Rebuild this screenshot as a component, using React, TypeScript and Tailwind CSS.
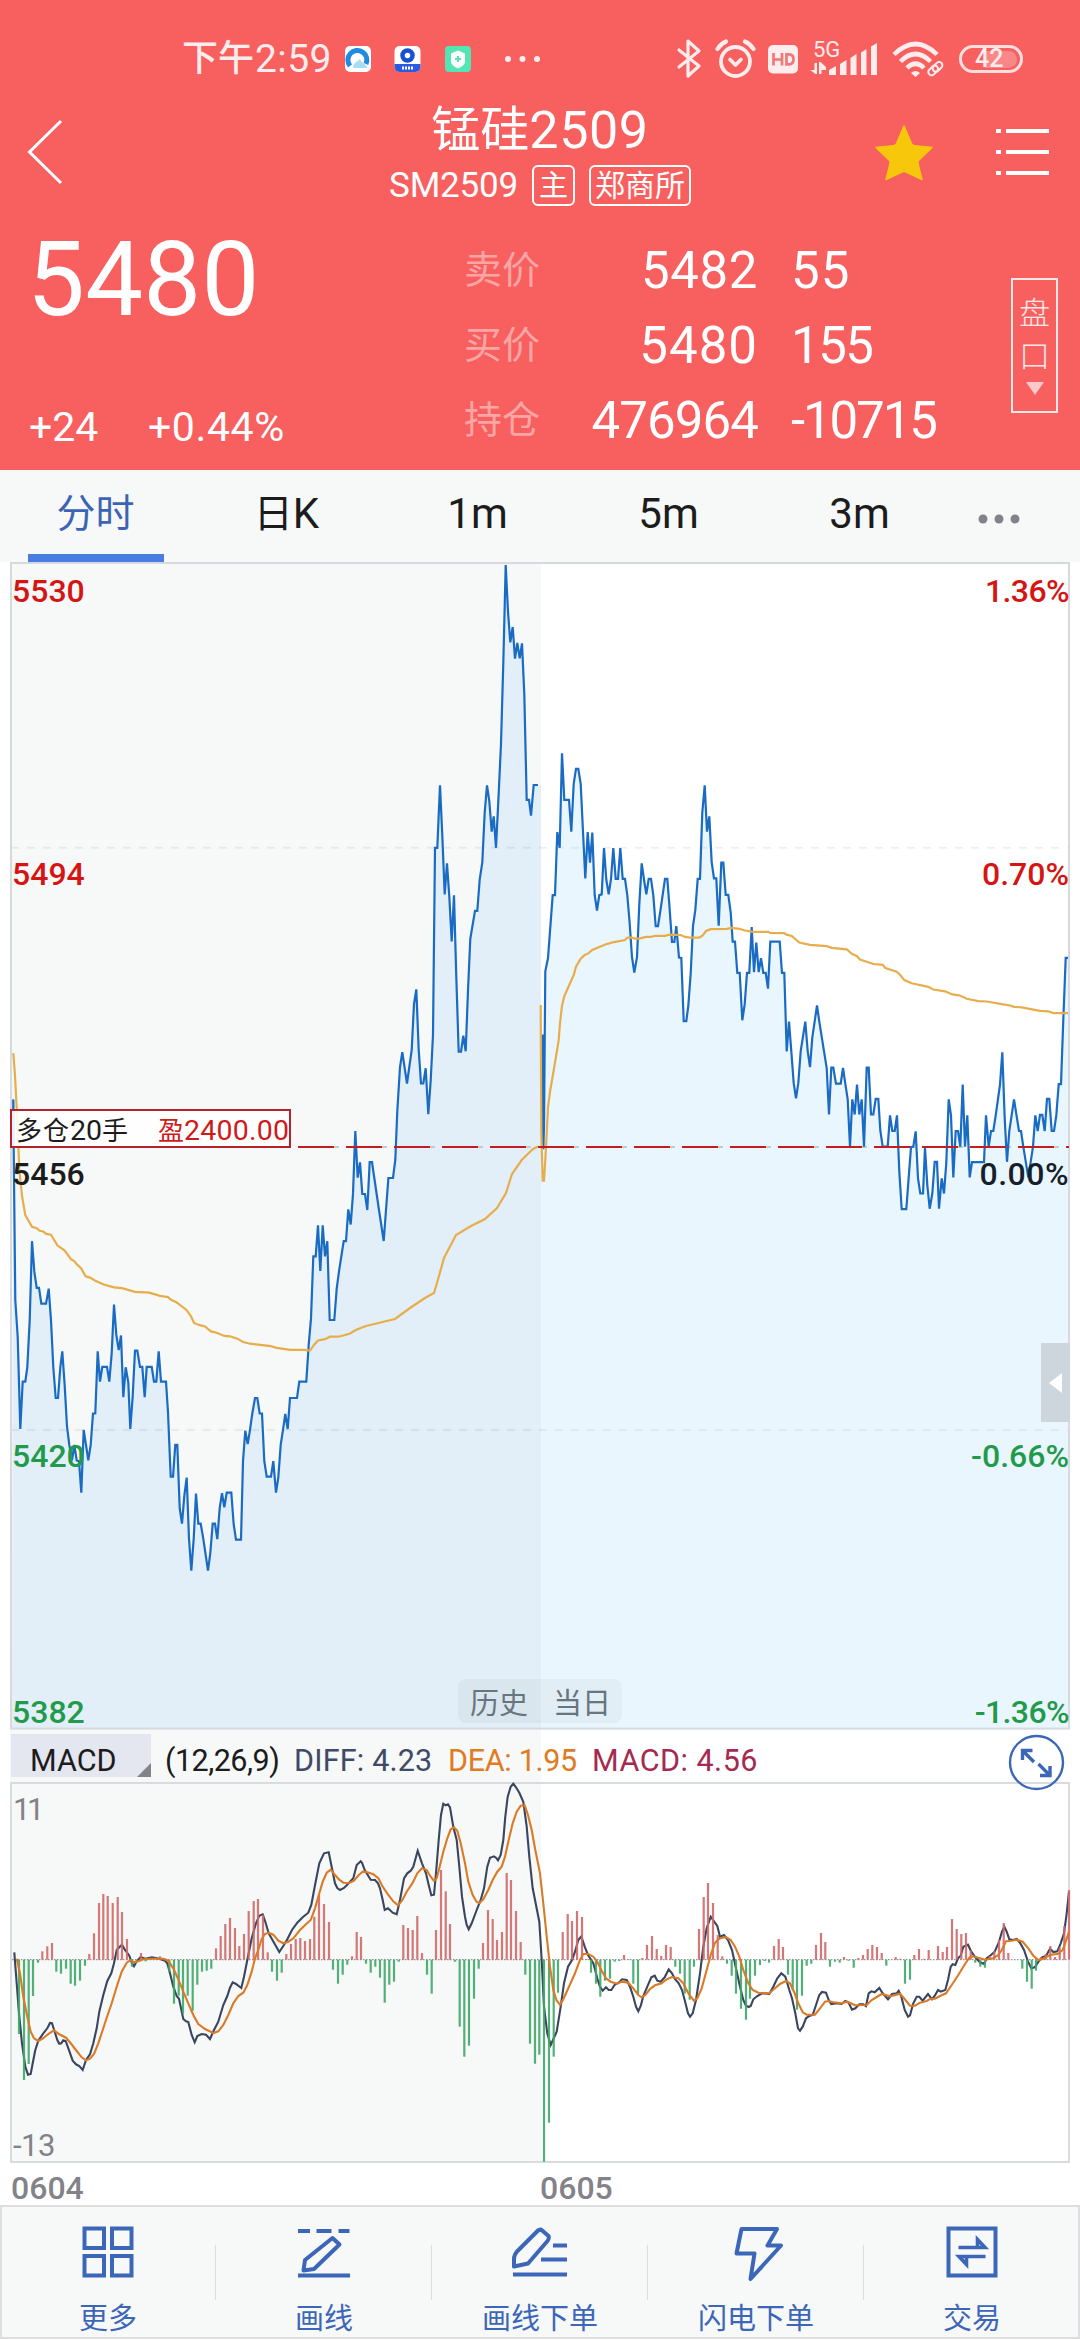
import React from "react";

type Block = { ox: number; oy: number; sx: number; sy: number; pts: string };

const decode = (blocks: Block[]): [number, number][] =>
  blocks.flatMap(({ ox, oy, sx, sy, pts }) =>
    pts
      .trim()
      .split(/\s+/)
      .map((p) => {
        const [x, y] = p.split(",").map(Number);
        return [+(ox + x / sx).toFixed(1), +(oy + y / sy).toFixed(1)] as [number, number];
      }),
  );

const toPath = (pts: [number, number][]) => "M" + pts.map((p) => p.join(" ")).join("L");

const A = { ox: 0, oy: 1100, sx: 3, sy: 2.45 };
const B = { ox: 340, oy: 560, sx: 3, sy: 2.6133 };
const C = { ox: 700, oy: 560, sx: 3, sy: 2.24 };
const P = { ox: 0, oy: 0, sx: 1, sy: 1 };

const priceHistory = decode([
  {
    ...A,
    pts: `40,-1 41,120 46,490 53,580 61,806 68,690 76,690 82,655 89,540 96,346 103,420 110,460 117,460 124,499 138,499 146,462 153,540 160,655 167,730 174,730 181,655 187,616 194,700 201,800 208,845 216,883 223,845 230,883 237,885 244,962 251,808 258,845 265,883 272,845 279,768 286,768 293,616 300,690 307,654 321,654 328,690 335,620 342,501 349,575 356,613 363,577 370,728 377,655 385,692 391,806 398,725 405,614 412,614 420,654 427,654 434,728 440,654 455,654 462,690 469,690 476,616 483,690 498,690 504,765 512,923 519,923 526,845 532,845 539,1000 546,1038 553,970 560,925 567,1075 574,1153 581,1075 588,964 595,1038 602,1038 610,1075 624,1153 631,1110 638,1038 645,1038 652,1076 659,1000 666,963 673,998 680,962 694,962 701,1040 708,1077 723,1077 729,885 736,810 743,843 750,808 757,768 765,730 772,730 779,768 786,768 793,885 800,923 813,923 820,885 828,962 835,925 842,845 849,808 856,769 863,806 870,730 891,730 898,690 919,690 926,600 933,535 940,383 947,383 954,307 961,419 968,307 975,383 982,346 989,539 1003,539 1010,462 1017,420 1031,346 1038,346 1045,268 1052,305 1059,230 1066,76 1073,190 1080,153`,
  },
  { ...P, pts: `362.3,1194 365,1194 367.3,1210 369.7,1162 372,1162 374.3,1178 379,1210 383.7,1241 386,1210 388.4,1178 393,1178` },
  {
    ...B,
    pts: `166,1568 172,1440 180,1325 187,1286 201,1368 208,1325 215,1280 222,1160 229,1122 236,1280 243,1368 250,1368 257,1328 265,1448 272,1360 279,1240 285,752 292,752 300,589 307,720 314,874 321,793 328,880 335,997 342,876 349,1090 356,1285 363,1285 370,1243 377,1284 384,1125 391,990 405,917 412,917 419,835 427,790 434,660 441,589 448,630 455,710 461,670 468,752 476,610 483,480 490,270 497,13 504,135 511,215 518,175 525,258 532,217 539,257 546,218 553,350 560,627 567,627 573,668 581,588 594,588`,
  },
]);

const priceToday = decode([
  {
    ...B,
    pts: `608,1240 610,1540 612,1480 616,1075 624,1040 638,876 645,876 652,711 659,752 666,505 673,627 687,627 694,710 701,585 708,546 715,546 722,585 729,710 736,832 743,711 750,791 757,712 764,876 771,916 778,876 785,874 792,753 799,835 806,874 813,833 820,753 827,833 834,833 841,753 848,833 855,833 862,876 869,950 876,1038 883,1078 891,1038 898,900 905,793 912,835 919,874 926,833 933,833 940,876 947,957 954,957 961,918 975,833 982,833 988,900 996,998 1003,998 1009,957 1017,1039 1024,1040 1031,1205 1039,1205 1045,1165 1052,1080 1059,957 1066,915 1073,833 1080,833 1087,660 1094,589 1101,710 1108,670 1115,790 1122,832 1129,832`,
  },
  {
    ...C,
    pts: `56,819 64,678 70,678 77,750 85,750 92,790 98,855 105,855 112,925 119,925 127,1031 134,995 141,925 148,925 155,822 162,923 169,857 176,923 183,892 190,925 197,925 204,960 211,855 239,855 246,925 253,925 260,1101 267,1034 274,1100 281,1172 288,1206 295,1172 302,1100 316,1034 323,1100 330,1136 337,1070 351,998 358,1034 372,1100 380,1138 387,1242 394,1137 400,1137 408,1173 422,1173 429,1138 436,1173 443,1208 450,1314 457,1208 464,1242 471,1175 478,1242 485,1208 492,1314 500,1137 506,1137 513,1242 520,1242 527,1207 535,1207 541,1278 548,1314 563,1314 570,1244 577,1279 584,1279 591,1244 598,1370 605,1454 619,1454 633,1315 640,1314 647,1280 654,1385 661,1419 669,1419 675,1317 682,1400 689,1453 697,1419 704,1348 711,1348 717,1453 725,1385 732,1419 739,1350 746,1208 753,1244 760,1383 767,1279 774,1279 781,1314 788,1175 795,1314 802,1244 809,1383 816,1349 852,1349 858,1244 866,1314 873,1279 880,1279 887,1244 900,1175 907,1103 914,1250 921,1348 928,1279 942,1208 957,1279 963,1279 970,1314 985,1383 992,1348 999,1314 1006,1244 1013,1279 1020,1243 1027,1243 1034,1279 1041,1207 1048,1207 1055,1279 1062,1279 1069,1244 1076,1174 1083,1174 1090,1030 1097,891 1104,891`,
  },
]);

const avgHistory = decode([
  {
    ...A,
    pts: `40,-115 45,-60 52,50 58,170 66,235 76,282 96,311 110,314 118,320 131,323 138,328 153,330 172,356 194,369 214,391 222,394 231,403 243,412 257,432 270,435 286,443 311,452 342,459 366,461 405,470 448,472 480,480 504,483 512,489 530,496 560,515 573,530 582,546 597,551 615,555 633,567 650,570 673,578 690,579 710,584 730,593 750,597 780,600 812,603 830,607 870,612 910,612 930,614 942,600 954,589 975,586 990,580 1015,580 1030,577 1050,572 1066,564 1080,559`,
  },
  { ...P, pts: `366,1326 395,1319 410,1308 425,1298 434,1293 439,1276 444,1258 456,1235 471,1226 485,1219 497,1208 506,1193 512,1174 521.7,1160 526.7,1155 533,1149 538,1146.5` },
]);

const avgToday = decode([
  {
    ...B,
    pts: `602,1163 604,1500 608,1622 612,1622 616,1568 620,1500 624,1430 631,1385 640,1340 656,1255 660,1210 666,1165 673,1140 687,1112 701,1085 708,1063 722,1042 734,1032 745,1028 757,1019 778,1011 798,1004 808,1002 818,999 855,993 862,987 875,987 888,990 900,989 918,985 934,985 945,982 975,982 988,979 1022,980 1035,985 1050,987 1075,987 1080,986`,
  },
  {
    ...C,
    pts: `0,845 8,841 18,831 32,827 80,826 95,824 118,826 135,830 160,833 205,833 210,835 253,836 260,839 275,842 298,857 330,862 380,865 395,869 440,872 455,882 470,887 480,895 500,900 520,905 548,907 556,914 590,922 600,929 613,941 635,948 685,956 700,962 735,966 757,973 778,975 800,983 835,988 860,989 905,995 930,998 942,1001 965,1002 1000,1007 1020,1010 1045,1011 1060,1015 1104,1015`,
  },
]);

const D = { ox: 0, oy: 1720, sx: 3, sy: 3 };
const E = { ox: 360, oy: 1760, sx: 3, sy: 3 };
const F = { ox: 700, oy: 1720, sx: 3, sy: 3 };

const bars = decode([
  {
    ...D,
    pts: `57,942 72,1080 86,1032 99,828 114,728 127,694 142,679 156,669 169,755 183,761 198,746 212,791 225,797 240,782 255,737 268,702 282,640 297,549 310,522 323,528 338,549 353,531 366,576 381,657 396,740 410,722 423,699 437,724 451,716 480,709 494,716 508,755 522,851 536,827 549,881 563,827 578,872 592,794 606,755 620,752 634,746 648,685 662,648 676,612 690,594 705,624 718,678 732,642 746,573 761,543 774,537 789,585 803,697 816,755 831,782 845,758 859,702 873,672 887,657 901,654 915,663 930,657 943,590 957,522 972,552 987,606 999,749 1014,791 1028,764 1042,734 1056,709 1070,636 1083,651`,
  },
  {
    ...E,
    pts: `18,611 32,638 46,620 60,653 74,728 88,674 102,665 116,605 130,495 144,504 158,510 172,468 186,579 201,644 215,701 228,510 243,330 257,394 270,492 285,605 299,800 313,890 327,857 342,716 356,626 369,549 384,450 398,477 411,540 426,516 440,339 453,360 468,453 482,546 496,644 510,851 525,911 538,884 552,1205 567,1088 581,890 594,698 608,516 623,462 636,483 651,453 666,471 680,597 693,638 708,671 721,710 735,662 750,656 764,605 778,603 792,585 806,598 820,671 834,704 847,594 861,555 876,528 890,567 904,588 918,555 932,561 946,620 960,641 974,701 989,719 1002,620 1017,507 1031,411 1044,369 1059,429 1073,525`,
  },
  {
    ...F,
    pts: `67,709 81,731 95,767 108,821 123,866 138,899 150,836 165,767 180,735 194,723 207,728 222,678 236,657 249,681 264,764 278,810 291,869 306,827 320,737 334,731 348,675 363,639 376,666 390,740 405,725 419,728 432,711 446,722 461,743 475,714 489,705 503,687 517,675 531,681 545,699 559,737 587,711 601,716 615,791 630,779 643,705 657,687 673,716 686,690 714,678 728,696 741,681 756,597 770,627 784,642 798,639 812,691 826,728 841,740 855,743 869,708 883,693 897,660 911,609 925,699 967,746 981,785 995,806 1008,752 1023,712 1037,702 1051,678 1065,711 1079,682 1093,618 1107,510`,
  },
]);

const diffLine = decode([
  {
    ...D,
    pts: `43,697 50,790 57,880 66,970 76,1040 84,1064 92,1062 98,1030 106,990 115,962 130,940 142,925 150,909 156,910 164,935 172,960 178,971 184,970 190,961 197,963 206,988 218,1022 228,1033 238,1038 248,1050 258,1020 270,1003 280,970 290,925 298,875 310,825 322,783 334,760 342,730 350,690 358,682 366,674 375,690 388,707 396,730 402,739 410,724 422,711 435,716 456,712 478,716 495,722 502,730 510,760 520,800 530,828 537,836 550,897 558,904 565,906 575,945 584,967 592,948 605,942 618,944 630,957 642,930 655,905 670,855 682,828 690,803 698,787 708,792 724,804 732,770 742,720 755,655 768,610 778,587 788,583 796,605 806,640 822,668 838,696 850,678 862,658 876,630 892,608 908,592 925,578 934,555 944,500 958,430 972,400 986,397 994,435 1005,490 1012,504 1020,510 1032,504 1046,490 1060,475 1070,435 1082,424`,
  },
  {
    ...E,
    pts: `6,308 14,330 32,359 45,360 54,370 60,385 68,420 74,450 84,445 98,458 110,463 120,420 132,355 142,340 152,332 160,320 173,272 186,310 198,340 206,375 214,406 222,404 228,340 236,240 243,165 250,131 257,136 264,133 270,142 280,200 290,240 298,320 306,410 315,470 320,495 326,508 335,490 350,450 362,420 372,385 382,320 390,293 402,289 408,293 414,301 422,285 430,240 436,170 443,110 452,80 460,71 468,82 478,98 490,125 500,200 508,290 518,385 528,435 538,485 545,600 552,740 562,820 572,855 580,838 590,815 602,740 612,670 624,620 636,600 645,575 655,540 664,529 674,560 684,585 700,610 712,655 720,680 728,692 738,682 746,690 754,690 764,674 776,668 786,658 800,660 810,680 820,710 828,740 835,754 842,738 850,708 862,680 874,652 884,647 892,662 902,665 914,652 926,628 936,640 944,656 956,670 966,690 974,720 984,760 990,770 998,760 1008,720 1020,640 1030,560 1040,505 1052,470 1062,484 1072,498`,
  },
  {
    ...F,
    pts: `60,650 64,649 72,645 84,660 96,690 108,745 120,800 130,840 138,857 146,861 152,858 160,838 172,828 186,820 208,822 220,800 232,775 244,760 256,770 268,810 276,835 286,880 294,925 300,932 308,920 318,895 328,888 338,885 348,855 358,825 366,816 378,818 386,840 394,852 410,850 425,852 436,843 446,848 456,869 466,865 478,853 490,853 498,858 506,820 514,814 524,817 538,804 548,820 564,838 576,822 590,820 596,812 604,830 614,870 624,890 630,886 640,850 650,830 658,830 668,842 684,822 696,838 706,825 714,810 722,815 736,810 744,780 752,740 758,733 766,735 774,715 782,707 790,680 804,674 814,695 826,712 840,727 852,732 860,715 872,706 884,695 896,668 906,635 913,620 920,635 928,658 940,660 950,657 960,668 972,690 984,725 994,745 1004,742 1016,724 1026,712 1038,708 1050,686 1060,696 1072,694 1082,670 1092,640 1100,580 1107,515`,
  },
]);

const deaLine = decode([
  {
    ...D,
    pts: `50,716 60,760 70,830 82,890 92,935 102,955 115,963 128,956 145,942 162,931 178,943 198,953 214,972 230,993 245,1012 258,1021 270,1016 282,1002 295,970 308,930 320,893 335,850 350,800 365,755 380,728 392,720 402,727 415,724 430,718 455,716 490,716 505,722 520,745 535,778 550,815 565,850 580,885 595,912 615,927 640,939 655,934 670,915 685,885 700,850 715,828 730,818 742,795 755,755 765,715 775,690 785,657 795,642 805,638 820,644 835,662 850,670 865,665 880,655 900,630 918,613 932,600 945,565 955,530 968,485 980,458 992,449 1005,465 1018,479 1030,488 1048,489 1062,482 1076,465`,
  },
  {
    ...E,
    pts: `0,342 8,335 20,336 40,343 55,355 68,380 85,405 100,424 114,436 126,422 140,395 158,368 172,340 186,325 200,330 210,347 222,363 230,355 238,325 250,275 262,235 272,208 282,202 292,212 302,250 315,310 325,365 338,405 350,426 358,429 370,418 385,390 398,360 412,335 425,320 435,290 446,240 458,190 470,155 482,137 494,136 504,165 515,210 526,270 540,340 550,430 560,530 570,620 580,690 590,722 600,734 610,718 625,685 645,640 660,600 670,582 685,582 700,590 712,605 725,632 738,655 752,665 770,671 785,665 805,668 820,685 835,705 845,712 856,705 870,687 885,676 905,670 920,658 936,651 955,655 970,670 985,700 1002,722 1012,715 1025,685 1040,630 1052,585 1064,550`,
  },
  {
    ...F,
    pts: `55,658 64,654 78,651 92,660 105,680 118,710 130,750 145,790 158,810 175,818 208,820 225,805 240,792 258,783 270,790 282,815 295,850 308,877 320,884 345,884 360,865 375,845 385,843 400,847 425,850 442,845 465,856 500,855 515,840 545,822 570,829 600,821 612,835 630,857 645,857 660,848 680,843 690,837 705,836 720,828 738,820 755,795 775,765 795,732 808,713 820,709 835,713 855,719 880,715 895,705 905,690 918,664 935,662 950,659 968,665 985,685 1000,707 1015,720 1030,716 1050,705 1075,701 1088,690 1097,665 1107,635`,
  },
]);

const ZERO = 1959.7;

function StatusBar() {
  return (
    <div className="flex h-[78px] pt-[39px]">
      <div className="ml-[182px] flex h-10 w-[163px] items-center whitespace-nowrap text-[39px] leading-10 text-[#ffecec]">
        <span className="w-[73px] text-[36px] font-medium">下午</span>
        <span className="tracking-[0.4px]">2:59</span>
      </div>
      <svg className="h-10 w-[200px]" viewBox="345 39 200 40">
        <rect x="345" y="46" width="26" height="26" rx="5" fill="#fff" />
        <path d="M350 66a9.500 9.500 0 1 1 16-2" fill="none" stroke="#1f8be0" strokeWidth="5" />
        <path d="M353 68c0-5 4-6 7-9 1 4 6 4 7 9z" fill="#a9dcf7" />
        <rect x="394.500" y="46" width="26" height="26" rx="5" fill="#fff" />
        <path d="M394.500 64h26v3a5 5 0 0 1-5 5h-16a5 5 0 0 1-5-5z" fill="#2a5be0" />
        <circle cx="407.500" cy="55.500" r="5" fill="none" stroke="#1a50d2" strokeWidth="4.500" />
        <path d="M402 68h12" stroke="#fff" strokeWidth="3" strokeDasharray="2 1" />
        <rect x="445" y="46" width="26" height="26" rx="4" fill="#53e6b4" />
        <path d="M458 50.500l7 3v8q0 4-7 7-7-3-7-7v-8z" fill="#fff" />
        <path d="M455 59h6M458 56v6" stroke="#53e6b4" strokeWidth="2" />
        <g fill="#ffecec">
          <circle cx="508" cy="59" r="3" />
          <circle cx="522.500" cy="59" r="3" />
          <circle cx="537" cy="59" r="3" />
        </g>
      </svg>
      <svg className="ml-[126px] h-10 w-[142px]" viewBox="670 39 142 40">
        <g fill="none" stroke="#ffecec" strokeWidth="3.200" strokeLinejoin="round" strokeLinecap="round">
          <path d="M678 50l20 16-11 10V41l11 10-20 16" />
          <circle cx="734.500" cy="61.500" r="14.500" strokeWidth="3.800" />
          <path d="M729 59.500l5.500 5.500 5.500-5.500" strokeWidth="3.600" />
          <path d="M716.500 49q3-5 8.500-7.500M752.500 49q-3-5-8.500-7.500" strokeWidth="4.200" />
        </g>
        <rect x="767" y="45" width="30" height="28.500" rx="5" fill="#ffecec" />
        <path d="M772.500 53v12.500M781 53v12.500M772.500 59.500h8.500M785.500 54.300h2.500q4.500 0 4.500 5t-4.500 5h-2.500z" fill="none" stroke="#f07878" strokeWidth="2.700" />
      </svg>
      <div className="-mt-1 flex w-[70px] flex-col">
        <span className="h-[26px] text-[22px] leading-[29px] text-[#ffecec]">5G</span>
      </div>
      <svg className="-ml-[74px] h-10 w-[72px]" viewBox="808 39 72 40">
        <g fill="#ffecec">
          <path d="M809 70h4.500V63h2.500v11h-1.500zM818 74V62h1.500l5.500 5v3h-4.500v4z" />
          <path d="M828 75v-5l7-4v9zM839 75V64l6.500-4v15zM849.500 75V58l6-4v21zM860 75V52.500l5.500-3.500v26zM870 75V46.500l6-3.500v32z" />
        </g>
      </svg>
      <svg className="ml-[10px] h-10 w-[54px]" viewBox="888 39 54 40">
        <g fill="none" stroke="#ffecec" strokeWidth="4.500">
          <path d="M891 54.500q21.500-21 43 0" />
          <path d="M897.500 61.500q15-15 30 0" />
          <path d="M904 68q8.500-8.500 17 0" />
        </g>
        <path d="M908 73q4.500-4 9 0l-4.500 4z" fill="#ffecec" />
        <g fill="none" stroke="#ffecec" strokeWidth="2">
          <rect x="925" y="67.500" width="11" height="6.500" rx="3.200" transform="rotate(-45 930 71)" />
          <rect x="929" y="64" width="11" height="6.500" rx="3.200" transform="rotate(-45 934 67)" />
        </g>
      </svg>
      <div className="relative ml-[14px] mt-[6px] flex h-[28px] w-[64px] items-center rounded-full border-[3px] border-[#ffdede]">
        <span className="ml-[23px] h-[17px] w-[32px] rounded-r-full bg-white/25" />
        <span className="absolute left-[13px] text-[25px] font-medium leading-[22px] text-[#ffecec]">42</span>
      </div>
    </div>
  );
}

function TitleBar() {
  return (
    <div className="flex h-[136px]">
      <svg className="h-[136px] w-[300px]" viewBox="0 78 300 136">
        <path d="M61 121L29.500 152 61 183" fill="none" stroke="#fff" strokeWidth="3" />
      </svg>
      <div className="flex w-[480px] flex-col items-center whitespace-nowrap text-white">
        <div className="mt-[23px] flex h-[60px] items-center leading-[60px]">
          <span className="text-[49px]">锰硅</span>
          <span className="text-[52px] tracking-[0.6px]">2509</span>
        </div>
        <div className="mt-[4px] flex h-[41px] items-center">
          <span className="text-[35px] leading-10 tracking-[-0.2px]">SM2509</span>
          <span className="ml-[14px] flex h-[41px] w-[43px] items-center justify-center rounded-md border-2 border-white text-[29px] leading-9">主</span>
          <span className="ml-[14px] flex h-[41px] w-[102px] items-center justify-center rounded-md border-2 border-white text-[30px] leading-9">郑商所</span>
        </div>
      </div>
      <svg className="h-[136px] w-[300px]" viewBox="780 78 300 136">
        <path
          d="M904 126l7.500 17.500q1 2 3.500 2.200l17 1.800-13 12.500q-1.500 1.500-1 3.500l4 16-16-7.500q-2-1-4 0l-16 7.500 4-16q.5-2-1-3.500L876 147.500l17-1.800q2.500-.2 3.500-2.200z"
          fill="#f7c70c"
          stroke="#f7c70c"
          strokeWidth="1.500"
          strokeLinejoin="round"
        />
        <path d="M996 131h5m5 0h43M996 152h5m5 0h43M996 173h5m5 0h43" stroke="#fff" strokeWidth="4" />
      </svg>
    </div>
  );
}

const quotes = [
  { label: "卖价", value: "5482", valueClass: "tracking-[0.6px]", extra: "55", extraClass: "tracking-[1px]" },
  { label: "买价", value: "5480", valueClass: "tracking-[1px]", extra: "155", extraClass: "tracking-[-1.5px]" },
  { label: "持仓", value: "476964", valueClass: "tracking-[-0.9px]", extra: "-10715", extraClass: "tracking-[-2.1px]" },
];

function Quote() {
  return (
    <div className="flex h-[256px] whitespace-nowrap text-white">
      <div className="flex w-[464px] flex-col">
        <div className="ml-[27px] mt-[16px] h-[100px] text-[103px] leading-[100px] tracking-[0.3px]">5480</div>
        <div className="mt-[77px] flex h-10 text-[41px] leading-10">
          <span className="ml-[29px] w-[119px]">+24</span>
          <span className="tracking-[0.6px]">+0.44%</span>
        </div>
      </div>
      <div className="mt-[19px] flex w-[547px] flex-col">
        {quotes.map((q) => (
          <div key={q.label} className="flex h-[75px] items-center leading-[75px]">
            <span className="w-[94px] text-[38px] text-white/45">{q.label}</span>
            <span className={"w-[200px] text-right text-[51px] " + q.valueClass}>{q.value}</span>
            <span className={"ml-[33px] text-[51px] " + q.extraClass}>{q.extra}</span>
          </div>
        ))}
      </div>
      <div className="mt-[64px] flex h-[135px] w-[47px] flex-col items-center border-2 border-white/85 text-[31px] font-light text-white/85">
        <span className="mt-[12px] h-[44px] leading-[44px]">盘</span>
        <span className="h-[42px] leading-[42px]">口</span>
        <svg className="mt-1 h-[13px] w-[18px]" viewBox="0 0 18 13">
          <path d="M0 0h18L9 13z" fill="#fdc9c9" />
        </svg>
      </div>
    </div>
  );
}

function Tabs() {
  return (
    <div className="flex h-[92px] bg-[#f7f8f8] text-[42px] leading-[86px] text-[#1c1c1c]">
      <div className="flex w-[191px] flex-col items-center text-[#3c64b4]">
        <span className="h-[84px] text-[39px] leading-[88px]">分时</span>
        <span className="h-2 w-[136px] bg-[#4a7de2]" />
      </div>
      <div className="flex w-[191px] justify-center leading-[88px]">
        <span className="text-[39px]">日</span>K
      </div>
      <span className="w-[191px] text-center leading-[88px]">1m</span>
      <span className="w-[191px] text-center leading-[88px]">5m</span>
      <span className="w-[191px] text-center leading-[88px]">3m</span>
      <svg className="ml-[18px] mt-[38px] h-[22px] w-[52px]" viewBox="973 508 52 22">
        <g fill="#828288">
          <circle cx="983" cy="519" r="4.500" />
          <circle cx="999" cy="519" r="4.500" />
          <circle cx="1015" cy="519" r="4.500" />
        </g>
      </svg>
    </div>
  );
}

function PriceChart() {
  const first = priceHistory[0];
  const axis = "absolute text-[32px] font-medium leading-8";
  return (
    <div className="relative h-[1168px]">
      <svg className="h-[1168px] w-[1060px]" viewBox="10 562 1060 1168">
        <path d={`${toPath(priceHistory)}H541V1728H12Z`} fill="#e2eff8" />
        <path d={`${toPath(priceToday)}H1069V1728H541V1147Z`} fill="#eaf6fd" />
        <path d="M11 847.800H1069M11 1430H1069" stroke="#000" strokeOpacity=".06" strokeWidth="2" strokeDasharray="8 8" />
        <path d="M11 1147H1069" stroke="#c4c9ce" strokeWidth="2" strokeDasharray="8 8" />
        <rect x="11" y="563" width="1058" height="1165.600" fill="none" stroke="#d6dade" strokeWidth="2" />
        <path d={`M${first[0]} ${first[1]}V1147`} stroke="#1c69c0" strokeWidth="1.500" />
        <path d={toPath(priceHistory)} fill="none" stroke="#1a6bc4" strokeWidth="2.200" />
        <path d={toPath(priceToday)} fill="none" stroke="#1a6bc4" strokeWidth="2.200" />
        <path d={toPath(avgHistory)} fill="none" stroke="#e8ad4b" strokeWidth="2.200" />
        <path d={toPath(avgToday)} fill="none" stroke="#e8ad4b" strokeWidth="2.200" />
        <path d="M298 1147H1069" stroke="#c41c20" strokeWidth="2" strokeDasharray="36 12" />
      </svg>
      <span className={axis + " left-[2px] top-[13px] text-[#d61414]"}>5530</span>
      <span className={axis + " left-[2px] top-[296px] text-[#d61414]"}>5494</span>
      <span className={axis + " left-[2px] top-[596px] text-[#1c1c1c]"}>5456</span>
      <span className={axis + " left-[2px] top-[878px] text-[#229a4c]"}>5420</span>
      <span className={axis + " left-[2px] top-[1134px] text-[#229a4c]"}>5382</span>
      <span className={axis + " right-[1px] top-[13px] tracking-[-0.6px] text-[#d61414]"}>1.36%</span>
      <span className={axis + " right-[1px] top-[296px] text-[#d61414]"}>0.70%</span>
      <span className={axis + " right-[1px] top-[596px] tracking-[0.5px] text-[#16202a]"}>0.00%</span>
      <span className={axis + " right-[1px] top-[878px] text-[#229a4c]"}>-0.66%</span>
      <span className={axis + " right-[1px] top-[1134px] tracking-[-0.6px] text-[#229a4c]"}>-1.36%</span>
      <div className="absolute left-0 top-[547px] flex h-[39px] w-[281px] items-center whitespace-nowrap border-2 border-[#b8202a] bg-white/90 pl-1 pt-[5px] text-[28.5px] leading-9">
        <span className="text-[26px] tracking-[1px] text-[#1c1c1c]">多仓</span>
        <span className="text-[#1c1c1c]">20</span>
        <span className="text-[26px] text-[#1c1c1c]">手</span>
        <span className="ml-[30px] text-[26px] text-[#cf1a1a]">盈</span>
        <span className="tracking-[0.2px] text-[#cf1a1a]">2400.00</span>
      </div>
      <div className="absolute right-0 top-[781px] flex h-[79px] w-[29px] items-center justify-center bg-[#cdd6dd]">
        <svg className="h-[20px] w-[13px]" viewBox="0 0 13 20">
          <path d="M13 0v20L0 10z" fill="#fff" />
        </svg>
      </div>
      <div className="absolute left-[448px] top-[1117px] flex h-[44px] w-[164px] overflow-hidden rounded-lg text-[29px] leading-[50px] text-[#67757f]">
        <span className="w-[83px] bg-[#dae6ee] pl-3">历史</span>
        <span className="w-[81px] bg-[#e2eef5] pl-3">当日</span>
      </div>
    </div>
  );
}

function IndicatorBar() {
  return (
    <div className="flex h-[52px] items-start whitespace-nowrap pt-1 text-[30.5px] leading-[53px]">
      <div className="relative ml-px h-[43px] w-[140px] bg-[#e4e6f0] pl-[19px] text-[#1c1c1c]">
        MACD
        <svg className="absolute bottom-0 right-0 h-[14px] w-[14px]" viewBox="0 0 14 14">
          <path d="M14 0v14H0z" fill="#828288" />
        </svg>
      </div>
      <span className="ml-[14px] w-[129px] tracking-[-0.5px] text-[#1c1c1c]">(12,26,9)</span>
      <span className="w-[154px] tracking-[0.2px] text-[#3f4a66]">DIFF: 4.23</span>
      <span className="w-[144px] tracking-[-0.3px] text-[#e07b24]">DEA: 1.95</span>
      <span className="tracking-[0.5px] text-[#a52a4f]">MACD: 4.56</span>
      <svg className="relative z-10 ml-auto mr-[5px] h-[57px] w-[57px]" viewBox="1007 1734 57 57">
        <circle cx="1035.500" cy="1762.500" r="26.500" fill="none" stroke="#3c66b8" strokeWidth="2.400" />
        <path d="M1021.500 1760v-9.500h10M1022 1751l11 11M1049 1766v9.500h-10M1048.500 1775l-11-11" fill="none" stroke="#3c66b8" strokeWidth="3.400" />
      </svg>
    </div>
  );
}

function MacdChart() {
  const label = "absolute left-[3px] text-[31px] leading-8 text-[#828288]";
  return (
    <div className="relative h-[381px]">
      <svg className="h-[381px] w-[1061px]" viewBox="10 1782 1061 381">
        <rect x="11" y="1783" width="1058" height="379" fill="none" stroke="#d9dcdf" strokeWidth="2" />
        <path d={`M12 ${ZERO}H1068`} stroke="#8f9296" strokeWidth="1.300" strokeDasharray="1.500 1.500" />
        <path d={toPath(diffLine)} fill="none" stroke="#3a4560" strokeWidth="2.100" />
        {bars.map(([x, y]) => (
          <path key={x} d={`M${x} ${ZERO}V${y}`} stroke={y < ZERO ? "#d06868" : "#3fa668"} strokeWidth="2.200" strokeOpacity=".9" />
        ))}
        <path d={toPath(deaLine)} fill="none" stroke="#db7a26" strokeWidth="2.100" />
      </svg>
      <span className={label + " top-[12px] tracking-[-3.5px]"}>11</span>
      <span className={label + " top-[348px] tracking-[-0.5px]"}>-13</span>
    </div>
  );
}

const actions: { label: string; icon: React.ReactNode }[] = [
  {
    label: "更多",
    icon: (
      <g>
        <rect x="8.500" y="8.500" width="19.500" height="19.500" />
        <rect x="36" y="8.500" width="19.500" height="19.500" />
        <rect x="8.500" y="36" width="19.500" height="19.500" />
        <rect x="36" y="36" width="19.500" height="19.500" />
      </g>
    ),
  },
  {
    label: "画线",
    icon: (
      <g>
        <path d="M6 11h12M24.500 11h15M46.500 11h11M6 55.500h52" />
        <path d="M40.500 18l7 6.500L22 49l-10.500 1.500L13 40z" strokeLinejoin="round" />
      </g>
    ),
  },
  {
    label: "画线下单",
    icon: (
      <g>
        <path d="M45 25.500h14M33 39.500h26M5 54.500h54" />
        <path d="M33 9.500l7.500 6.500q1 2-1 5L20 43.500 6 46.500v-7.500q0-4 3-7.500L30 10.500z" strokeLinejoin="round" />
      </g>
    ),
  },
  { label: "闪电下单", icon: <path d="M17.500 9h35.500L43.500 25.500h13.500L26.500 59l4-25.500H12.500z" strokeLinejoin="round" /> },
  {
    label: "交易",
    icon: (
      <g>
        <rect x="8.500" y="8.500" width="47" height="47" />
        <path d="M18.500 27.500h26.500L37.500 19.500v8M45.500 36.500H19l7.500 8v-8" strokeWidth="3.600" />
      </g>
    ),
  },
];

function BottomNav() {
  return (
    <div className="flex h-[134px] bg-[#f7f8f8] shadow-[inset_0_0_0_2px_#dcdee0]">
      {actions.map((a, i) => (
        <div key={a.label} className="relative flex flex-1 flex-col items-center text-[#3c66b8]">
          <svg className="mt-[15px] h-16 w-16" viewBox="0 0 64 64" fill="none" stroke="currentColor" strokeWidth="4">
            {a.icon}
          </svg>
          <span className="mt-[15px] whitespace-nowrap text-[29px] leading-10">{a.label}</span>
          {i < 4 && <span className="absolute right-0 top-[40px] h-[55px] w-px bg-[#dcdee0]" />}
        </div>
      ))}
    </div>
  );
}

export default function App() {
  return (
    <div className="h-[2340px] w-[1080px] overflow-hidden bg-white font-[Roboto,'Noto_Sans_CJK_SC',sans-serif]">
      <header className="h-[470px] bg-[#f85f5f]">
        <StatusBar />
        <TitleBar />
        <Quote />
      </header>
      <Tabs />
      <main className="mx-[10px] w-[1060px] bg-[linear-gradient(to_right,#f6f9f8_531px,#ffffff_531px)]">
        <PriceChart />
        <IndicatorBar />
        <MacdChart />
      </main>
      <div className="flex h-[42px] pt-[9px] text-[32px] font-medium leading-8 text-[#828288]">
        <span className="w-[540px] pl-[11px]">0604</span>
        <span>0605</span>
      </div>
      <BottomNav />
    </div>
  );
}
